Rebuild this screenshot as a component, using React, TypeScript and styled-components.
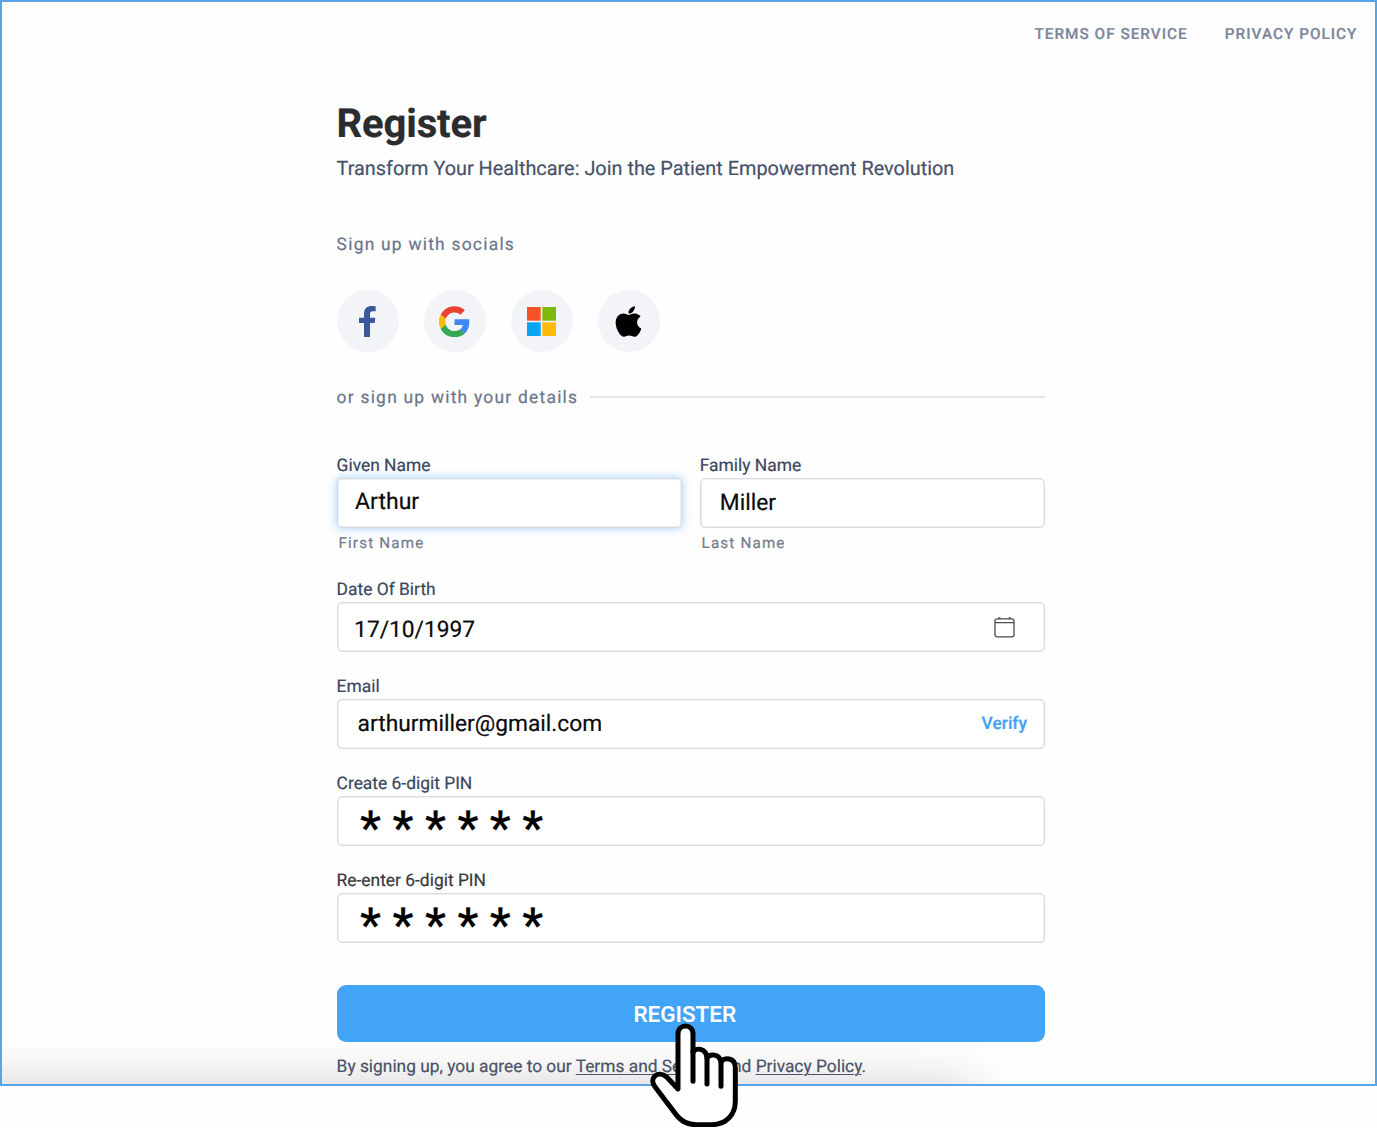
import React from 'react';
import styled, { createGlobalStyle, css } from 'styled-components';
import { FaApple } from 'react-icons/fa';

const GlobalStyle = createGlobalStyle`
  *, *::before, *::after { box-sizing: border-box; }
  body {
    margin: 0;
    min-height: 1128px;
    background: #fefefe;
    font-family: Roboto, "Liberation Sans", sans-serif;
    text-rendering: geometricPrecision;
    -webkit-text-stroke: 0.2px currentColor;
  }
`;

const Frame = styled.div`
  position: relative;
  width: 1377px;
  height: 1086px;
  border: 2px solid #57a5e7;
  background: #fefefe;
  isolation: isolate;
`;

const ShadowClip = styled.div`
  position: absolute;
  inset: 0;
  overflow: hidden;
  z-index: -1;
  &::after {
    content: '';
    position: absolute;
    left: -100px;
    top: 100%;
    width: 1072px;
    height: 120px;
    box-shadow: 0 3px 52px rgba(0, 0, 0, 0.2);
  }
`;

const Nav = styled.nav`
  display: flex;
  justify-content: flex-end;
  align-items: center;
  gap: 37px;
  height: 64px;
  padding-right: 17.5px;
`;

const NavLink = styled.a`
  font-size: 15.3px;
  font-weight: 500;
  letter-spacing: 1.02px;
  color: #7c869b;
`;

const Form = styled.main`
  display: flex;
  flex-direction: column;
  width: 708.4px;
  margin: 36px 0 0 334.6px;
`;

const Title = styled.h1`
  margin: 0;
  font-size: 40px;
  line-height: 44px;
  font-weight: 700;
  letter-spacing: -0.15px;
  color: #2b2c2e;
`;

const Subtitle = styled.p`
  margin: 11px 0 0;
  font-size: 19.87px;
  line-height: 24px;
  color: #475269;
`;

const spacedText = css`
  font-size: 17.4px;
  line-height: 24px;
  letter-spacing: 1.24px;
  color: #6a7589;
`;

const SocialHeading = styled.p`
  ${spacedText}
  margin: 52px 0 0;
`;

const Socials = styled.div`
  display: flex;
  gap: 25px;
  margin-top: 33.4px;
`;

const SocialButton = styled.button`
  display: grid;
  place-items: center;
  width: 62px;
  height: 62px;
  padding: 0;
  border: 0;
  border-radius: 50%;
  background: #f2f4f8;
  svg { display: block; }
`;

const Divider = styled.div`
  ${spacedText}
  display: flex;
  align-items: center;
  gap: 12px;
  margin: 34.1px 0 41.5px;
  &::after {
    content: '';
    flex: 1;
    height: 2px;
    margin-bottom: 2px;
    background: #e3e5e9;
  }
`;

const NameRow = styled.div`
  display: grid;
  grid-template-columns: 1fr 1fr;
  gap: 18px;
  margin-bottom: 23.4px;
`;

const Field = styled.div`
  display: flex;
  flex-direction: column;
`;

const FieldStack = styled.div`
  display: flex;
  flex-direction: column;
  gap: 21.4px;
`;

const Label = styled.label<{ $neutral?: boolean }>`
  height: 26px;
  padding-top: 1px;
  font-size: 17.4px;
  line-height: 26px;
  color: ${(p) => (p.$neutral ? '#38393c' : '#3b475e')};
`;

const InputBox = styled.div<{ $focused?: boolean; $indent?: number }>`
  display: flex;
  align-items: center;
  justify-content: space-between;
  height: 49.6px;
  padding: 0 17px 0 ${(p) => p.$indent ?? 17.5}px;
  border: 1px solid #d5dae3;
  border-radius: 5px;
  background: #fff;
  box-shadow: ${(p) =>
    p.$focused
      ? 'inset 0 0 0 1px #eef1f5, 0 0 9px 1px rgba(66, 160, 240, 0.42)'
      : 'inset 0 0 0 1px #eef0f4'};
`;

const Value = styled.span<{ $size?: number; $shift?: number }>`
  font-size: ${(p) => p.$size ?? 22.75}px;
  line-height: 28px;
  padding-top: ${(p) => Math.max(p.$shift ?? 0, 0)}px;
  padding-bottom: ${(p) => Math.max(-(p.$shift ?? 0), 0)}px;
  color: #0b0b0c;
`;

const PinValue = styled.span`
  font-size: 47px;
  font-weight: 500;
  line-height: 48px;
  height: 32px;
  letter-spacing: 11.6px;
  color: #000;
`;

const Hint = styled.span`
  margin: 5.1px 0 0 1.8px;
  font-size: 15.2px;
  line-height: 20px;
  letter-spacing: 1.17px;
  color: #727c8c;
`;

const VerifyLink = styled.a`
  font-size: 17.4px;
  font-weight: 500;
  line-height: 24px;
  padding-top: 1px;
  color: #42a1f3;
`;

const CalendarSvg = styled.svg`
  display: block;
  margin: 1px 11.5px 0 0;
`;

const SubmitButton = styled.button`
  height: 57px;
  margin-top: 42.4px;
  padding: 1px 12px 1px 0;
  border: 0;
  border-radius: 9px;
  background: #42a4f6;
  color: #fff;
  font-family: inherit;
  font-size: 22.5px;
  font-weight: 500;
`;

const Legal = styled.p`
  margin: 15.3px 0 0;
  font-size: 17.35px;
  line-height: 20px;
  color: #4a5367;
  a { text-decoration: underline; text-underline-offset: 2px; text-decoration-thickness: 1px; }
`;

const HandPointer = styled.svg`
  position: absolute;
  left: 648px;
  top: 1019px;
`;

const FacebookLogo = () => (
  <svg width="16.7" height="31.3" viewBox="88 77 50 94">
    <path fill="#3b5998" d="M103 171V128H88V112H103V100C103 85 112 77 126 77C131 77 136 77.5 138 78V93H130C122 93 121 97 121 102V112H137L135 128H121V171Z" />
  </svg>
);

const GoogleLogo = () => (
  <svg width="31" height="31.5" viewBox="0 0 48 48">
    <path fill="#EA4335" d="M24 9.5c3.54 0 6.71 1.22 9.21 3.6l6.85-6.85C35.9 2.38 30.47 0 24 0 14.62 0 6.51 5.38 2.56 13.22l7.98 6.19C12.43 13.72 17.74 9.5 24 9.5z" />
    <path fill="#4285F4" d="M46.98 24.55c0-1.57-.15-3.09-.38-4.55H24v9.02h12.94c-.58 2.96-2.26 5.48-4.78 7.18l7.73 6c4.51-4.18 7.09-10.36 7.09-17.65z" />
    <path fill="#FBBC05" d="M10.53 28.59c-.48-1.45-.76-2.99-.76-4.59s.27-3.14.76-4.59l-7.98-6.19C.92 16.46 0 20.12 0 24c0 3.88.92 7.54 2.56 10.78l7.97-6.19z" />
    <path fill="#34A853" d="M24 48c6.48 0 11.93-2.13 15.89-5.81l-7.73-6c-2.15 1.45-4.92 2.3-8.16 2.3-6.26 0-11.57-4.22-13.47-9.91l-7.98 6.19C6.51 42.62 14.62 48 24 48z" />
  </svg>
);

const MicrosoftLogo = () => (
  <svg width="29" height="29" viewBox="0 0 29 29">
    <rect width="13.7" height="13.7" fill="#f35325" />
    <rect x="15.3" width="13.7" height="13.7" fill="#7fba0a" />
    <rect y="15.3" width="13.7" height="13.7" fill="#05a6f0" />
    <rect x="15.3" y="15.3" width="13.7" height="13.7" fill="#ffba08" />
  </svg>
);

const CalendarIcon = () => (
  <CalendarSvg width="21" height="21" viewBox="0 0 21 21" fill="none" stroke="#4a4a4c" strokeWidth="1.3">
    <rect x="1" y="1.8" width="19" height="18" rx="2" />
    <path d="M1 5.6H20M4.2 1H6.4M14.6 1H16.8" />
  </CalendarSvg>
);

const pin = '******';

export default function App() {
  return (
    <>
      <GlobalStyle />
      <Frame>
        <ShadowClip />
        <Nav>
          <NavLink>TERMS OF SERVICE</NavLink>
          <NavLink>PRIVACY POLICY</NavLink>
        </Nav>
        <Form>
          <Title>Register</Title>
          <Subtitle>Transform Your Healthcare: Join the Patient Empowerment Revolution</Subtitle>
          <SocialHeading>Sign up with socials</SocialHeading>
          <Socials>
            <SocialButton aria-label="Facebook"><FacebookLogo /></SocialButton>
            <SocialButton aria-label="Google"><GoogleLogo /></SocialButton>
            <SocialButton aria-label="Microsoft"><MicrosoftLogo /></SocialButton>
            <SocialButton aria-label="Apple"><FaApple size={35} color="#000" /></SocialButton>
          </Socials>
          <Divider>or sign up with your details</Divider>
          <NameRow>
            <Field>
              <Label>Given Name</Label>
              <InputBox $focused><Value $size={23} $shift={-1}>Arthur</Value></InputBox>
              <Hint>First Name</Hint>
            </Field>
            <Field>
              <Label>Family Name</Label>
              <InputBox $indent={19}><Value $shift={0}>Miller</Value></InputBox>
              <Hint>Last Name</Hint>
            </Field>
          </NameRow>
          <FieldStack>
            <Field>
              <Label>Date Of Birth</Label>
              <InputBox $indent={16.5}>
                <Value $shift={6}>17/10/1997</Value>
                <CalendarIcon />
              </InputBox>
            </Field>
            <Field>
              <Label>Email</Label>
              <InputBox $indent={20}>
                <Value $shift={0.4}>arthurmiller@gmail.com</Value>
                <VerifyLink>Verify</VerifyLink>
              </InputBox>
            </Field>
            <Field>
              <Label>Create 6-digit PIN</Label>
              <InputBox $indent={22.5}><PinValue>{pin}</PinValue></InputBox>
            </Field>
            <Field>
              <Label $neutral>Re-enter 6-digit PIN</Label>
              <InputBox $indent={22.5}><PinValue>{pin}</PinValue></InputBox>
            </Field>
          </FieldStack>
          <SubmitButton>REGISTER</SubmitButton>
          <Legal>
            By signing up, you agree to our <a>Terms and Service</a> and <a>Privacy Policy</a>.
          </Legal>
        </Form>
        <HandPointer width="90" height="106" viewBox="270 138 270 318" fill="#fff" stroke="#000" strokeWidth="15" strokeLinecap="round" strokeLinejoin="round">
          <path d="M354 342V177C354 145 399 145 399 177V232C406 217 438 218 441 249C449 235 479 236 483 262C490 246 526 246 526 278V378C526 420 498 449 456 449H408C382 449 365 440 350 421L286 337C264 309 294 284 320 306Z" />
          <path d="M399 228V319M441 248V327M483 260V334" fill="none" />
        </HandPointer>
      </Frame>
    </>
  );
}
